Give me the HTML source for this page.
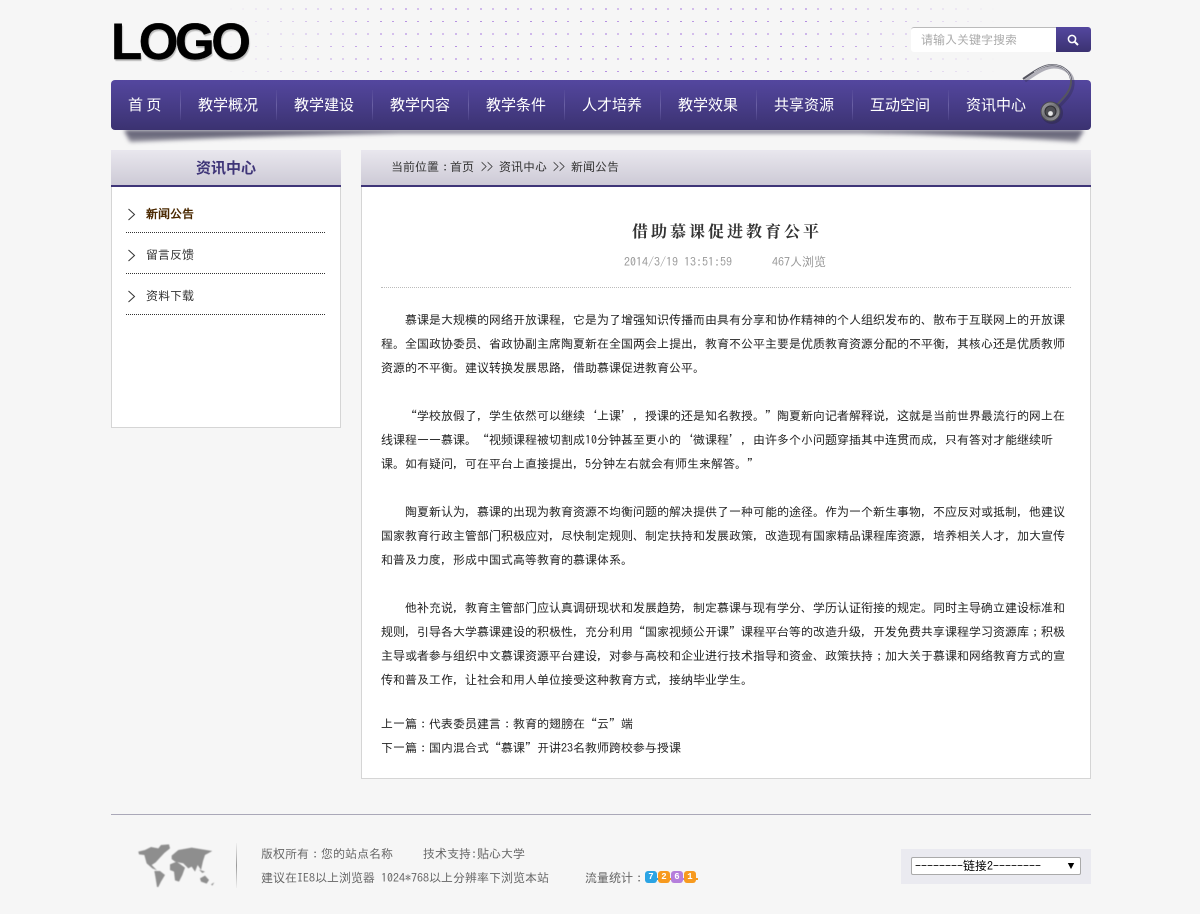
<!DOCTYPE html>
<html lang="zh-CN"><head><meta charset="utf-8"><title>新闻公告</title>
<style>
html,body{margin:0;padding:0}
body{width:1200px;height:914px;position:relative;overflow:hidden;background:#f6f6f6;font:12px/24px "IPAGothic","WenQuanYi Zen Hei","Noto Sans CJK SC",sans-serif;color:#333}
.a{position:absolute;white-space:nowrap}
.nav{left:111px;top:80px;width:980px;height:50px;border-radius:4px;background:linear-gradient(#54479f,#3b3271)}
.n{position:absolute;top:93px;color:#fff;font:15px/24px "WenQuanYi Zen Hei","Noto Sans CJK SC",sans-serif;white-space:nowrap}
.s{position:absolute;top:90px;width:1px;height:30px;background:linear-gradient(rgba(110,100,170,.15),#6a60a5 50%,rgba(110,100,170,.15))}
.head{top:150px;height:35px;background:linear-gradient(#e9e7ee,#cdcad6);border-bottom:2px solid #3f3578}
.box{background:#fff;border:1px solid #d5d5d5;border-top:0;box-sizing:border-box}
.p{left:381px;color:#222}
.d{left:126px;width:199px;height:0;border-top:1px dotted #333}
.f{color:#666}
.b{position:absolute;top:871px;width:12px;height:12px;border-radius:3px;color:#fff;font:bold 9px/12px "Liberation Mono",monospace;text-align:center}
.b::after{content:"";position:absolute;right:-2px;top:7px;width:2px;height:2px;background:inherit}
</style></head><body>
<svg class="a" style="left:220px;top:0" width="780" height="80" shape-rendering="crispEdges">
<defs><pattern id="dot" x="0" y="0" width="25" height="25" patternUnits="userSpaceOnUse" patternTransform="translate(-3 2)">
<rect x="0" y="6" width="2" height="2" fill="#d3bdec"/><rect x="13" y="6" width="2" height="2" fill="#cdb5ea"/>
<rect x="0" y="19" width="2" height="1" fill="#bb98e4"/><rect x="13" y="19" width="2" height="1" fill="#b28ce0"/></pattern>
<linearGradient id="fd"><stop offset="0" stop-color="#fff" stop-opacity="0"/><stop offset=".22" stop-color="#fff" stop-opacity=".95"/><stop offset=".75" stop-color="#fff" stop-opacity="1"/><stop offset="1" stop-color="#fff" stop-opacity="0"/></linearGradient>
<mask id="m"><rect width="780" height="80" fill="url(#fd)"/></mask></defs>
<rect width="780" height="76" fill="url(#dot)" mask="url(#m)"/></svg>

<div class="a" style="left:111px;top:12px;font:bold 51px/60px 'Liberation Sans',sans-serif;color:#000;text-shadow:1px 2px 1px #bbb;letter-spacing:-3.4px;-webkit-text-stroke:.4px #000">LOGO</div>

<div class="a" style="left:911px;top:27px;width:145px;height:25px;box-sizing:border-box;background:#fff;border-top:1px solid #bbb;border-radius:3px 0 0 3px;color:#aaa;padding-left:10px;line-height:24px">请输入关键字搜索</div>
<div class="a" style="left:1056px;top:27px;width:35px;height:25px;background:linear-gradient(#54479f,#3b3271);border-radius:0 3px 3px 0"></div>
<svg class="a" style="left:1066px;top:33px" width="14" height="14" fill="none" stroke="#fff"><circle cx="6" cy="6" r="3.6" stroke-width="1.5"/><path d="M8.8 8.8L12 12" stroke-width="2"/></svg>

<svg class="a" style="left:100px;top:125px" width="1000" height="25"><defs><filter id="bl" x="-5%" y="-50%" width="110%" height="200%"><feGaussianBlur stdDeviation="2"/></filter><linearGradient id="sg" x1="0" y1="0" x2="0" y2="1"><stop offset="0" stop-color="#55536a"/><stop offset="1" stop-color="#8f8e9a"/></linearGradient></defs>
<path d="M24 5L984 5L977 17Q880 10 760 8L300 8Q180 10 30 17Z" fill="url(#sg)" filter="url(#bl)"/></svg>
<div class="a nav"></div>

<div class="n" style="left:128px">首 页</div><div class="s" style="left:180px"></div>
<div class="n" style="left:198px">教学概况</div><div class="s" style="left:276px"></div>
<div class="n" style="left:294px">教学建设</div><div class="s" style="left:372px"></div>
<div class="n" style="left:390px">教学内容</div><div class="s" style="left:468px"></div>
<div class="n" style="left:486px">教学条件</div><div class="s" style="left:564px"></div>
<div class="n" style="left:582px">人才培养</div><div class="s" style="left:660px"></div>
<div class="n" style="left:678px">教学效果</div><div class="s" style="left:756px"></div>
<div class="n" style="left:774px">共享资源</div><div class="s" style="left:852px"></div>
<div class="n" style="left:870px">互动空间</div><div class="s" style="left:948px"></div>
<div class="n" style="left:966px">资讯中心</div>

<svg class="a" style="left:1010px;top:55px" width="90" height="95" fill="none">
<defs><linearGradient id="rg" x1="0" y1="0" x2="1" y2="1"><stop offset="0" stop-color="#a8a8ac"/><stop offset=".5" stop-color="#6d6d72"/><stop offset="1" stop-color="#a0a0a4"/></linearGradient></defs>
<path d="M13 24C22 18 32 10 42 10C54 10 62 18 61 28C60 38 52 44 46 51" stroke="#2f2b45" stroke-width="3" opacity=".35" transform="translate(2 2)"/>
<path d="M13 24C22 18 32 10 42 10C54 10 62 18 61 28C60 38 52 44 46 51" stroke="#55555f" stroke-width="2"/>
<path d="M24 17C30 13 36 10 42 10C52 10 60 16 61 25" stroke="#cfcfd6" stroke-width=".8"/>
<circle cx="42" cy="58" r="11" fill="#2e2a48" opacity=".5"/>
<circle cx="40.500" cy="56.500" r="9.500" fill="url(#rg)" stroke="#4a4a50"/><circle cx="40.500" cy="56.500" r="5.500" fill="#4e4e54" stroke="#2e2e33"/><circle cx="40.500" cy="58.500" r="2.400" fill="#e8e8e8"/></svg>

<div class="a head" style="left:111px;width:230px;text-align:center;font:bold 15px/35px 'WenQuanYi Zen Hei','Noto Sans CJK SC',sans-serif;color:#3f3578">资讯中心</div>
<div class="a box" style="left:111px;top:187px;width:230px;height:241px"></div>
<svg class="a" style="left:125px;top:205px" width="12" height="100" fill="none" stroke="#333"><path d="M3.500 4L9.500 9.500L3.500 15M3.500 45L9.500 50.500L3.500 56M3.500 86L9.500 91.500L3.500 97"/></svg>
<div class="a" style="left:146px;top:202px;font-weight:bold;color:#4a2800">新闻公告</div>
<div class="a" style="left:146px;top:243px">留言反馈</div>
<div class="a" style="left:146px;top:284px">资料下载</div>
<div class="a d" style="top:232px"></div><div class="a d" style="top:273px"></div><div class="a d" style="top:314px"></div>

<div class="a head" style="left:361px;width:730px"></div>
<div class="a box" style="left:361px;top:187px;width:730px;height:592px"></div>
<div class="a" style="left:391px;top:155px">当前位置：</div><div class="a" style="left:450px;top:155px">首页</div>
<div class="a" style="left:481px;top:155px">&gt;&gt;</div><div class="a" style="left:499px;top:155px">资讯中心</div>
<div class="a" style="left:553px;top:155px">&gt;&gt;</div><div class="a" style="left:571px;top:155px">新闻公告</div>

<div class="a" style="left:632px;top:219px;font:bold 16px/24px 'Noto Serif CJK SC',serif;letter-spacing:3px">借助慕课促进教育公平</div>
<div class="a" style="left:624px;top:250px;color:#999">2014/3/19 13:51:59</div>
<div class="a" style="left:772px;top:250px;color:#999">467人浏览</div>
<div class="a" style="left:381px;top:287px;width:690px;border-top:1px dotted #bbb"></div>

<div class="a p" style="top:308px;left:405px">慕课是大规模的网络开放课程，它是为了增强知识传播而由具有分享和协作精神的个人组织发布的、散布于互联网上的开放课</div>
<div class="a p" style="top:332px">程。全国政协委员、省政协副主席陶夏新在全国两会上提出，教育不公平主要是优质教育资源分配的不平衡，其核心还是优质教师</div>
<div class="a p" style="top:356px">资源的不平衡。建议转换发展思路，借助慕课促进教育公平。</div>
<div class="a p" style="top:404px;left:405px">“学校放假了，学生依然可以继续‘上课’，授课的还是知名教授。”陶夏新向记者解释说，这就是当前世界最流行的网上在</div>
<div class="a p" style="top:428px">线课程——慕课。“视频课程被切割成10分钟甚至更小的‘微课程’，由许多个小问题穿插其中连贯而成，只有答对才能继续听</div>
<div class="a p" style="top:452px">课。如有疑问，可在平台上直接提出，5分钟左右就会有师生来解答。”</div>
<div class="a p" style="top:500px;left:405px">陶夏新认为，慕课的出现为教育资源不均衡问题的解决提供了一种可能的途径。作为一个新生事物，不应反对或抵制，他建议</div>
<div class="a p" style="top:524px">国家教育行政主管部门积极应对，尽快制定规则、制定扶持和发展政策，改造现有国家精品课程库资源，培养相关人才，加大宣传</div>
<div class="a p" style="top:548px">和普及力度，形成中国式高等教育的慕课体系。</div>
<div class="a p" style="top:596px;left:405px">他补充说，教育主管部门应认真调研现状和发展趋势，制定慕课与现有学分、学历认证衔接的规定。同时主导确立建设标准和</div>
<div class="a p" style="top:620px">规则，引导各大学慕课建设的积极性，充分利用“国家视频公开课”课程平台等的改造升级，开发免费共享课程学习资源库；积极</div>
<div class="a p" style="top:644px">主导或者参与组织中文慕课资源平台建设，对参与高校和企业进行技术指导和资金、政策扶持；加大关于慕课和网络教育方式的宣</div>
<div class="a p" style="top:668px">传和普及工作，让社会和用人单位接受这种教育方式，接纳毕业学生。</div>
<div class="a p" style="top:712px">上一篇：代表委员建言：教育的翅膀在“云”端</div>
<div class="a p" style="top:736px">下一篇：国内混合式“慕课”开讲23名教师跨校参与授课</div>

<div class="a" style="left:111px;top:814px;width:980px;height:1px;background:#aaa8b8"></div>
<svg class="a" style="left:125px;top:835px" width="120" height="60" viewBox="0 0 360 180" fill="#8e8e8e"><defs><filter id="mb"><feGaussianBlur stdDeviation="1.4"/></filter></defs>
<g filter="url(#mb)"><path d="M40 50L60 45L78 36L100 40L108 30L132 28L135 40L118 54L105 68L92 82L80 90L96 106L82 100L65 85L58 60L42 58Z"/>
<path d="M88 108L105 108L120 120L108 140L100 156L96 156L92 130Z"/>
<path d="M140 62L160 45L200 38L262 48L240 60L234 78L228 105L218 90L210 110L200 95L190 100L175 85L150 80L140 72Z"/>
<path d="M135 88L155 80L180 98L172 120L162 140L150 136L147 110L135 105Z"/>
<path d="M225 130L240 122L252 135L245 146L228 140Z"/><path d="M222 104L240 110L232 114Z"/><path d="M258 148L268 142L262 152Z"/></g></svg>
<div class="a" style="left:236px;top:843px;width:1px;height:45px;background:linear-gradient(#f0f0f0,#999 50%,#f0f0f0)"></div>
<div class="a f" style="left:261px;top:842px">版权所有：您的站点名称</div>
<div class="a f" style="left:423px;top:842px">技术支持:贴心大学</div>
<div class="a f" style="left:261px;top:866px">建议在IE8以上浏览器 1024*768以上分辨率下浏览本站</div>
<div class="a f" style="left:585px;top:866px">流量统计：</div>
<div class="b" style="left:645px;background:#2ba4e4">7</div><div class="b" style="left:658px;background:#f79a1f">2</div><div class="b" style="left:671px;background:#b57fdc">6</div><div class="b" style="left:684px;background:#f79a1f">1</div>

<div class="a" style="left:901px;top:849px;width:190px;height:35px;background:#eaeaf0"></div>
<div class="a" style="left:911px;top:857px;width:170px;height:18px;box-sizing:border-box;background:#fff;border:1px solid #aaa;border-radius:2px;color:#000;line-height:16px;padding-left:3px">--------链接2--------<span style="position:absolute;right:5px;top:0;font-size:8px">▼</span></div>
</body></html>
